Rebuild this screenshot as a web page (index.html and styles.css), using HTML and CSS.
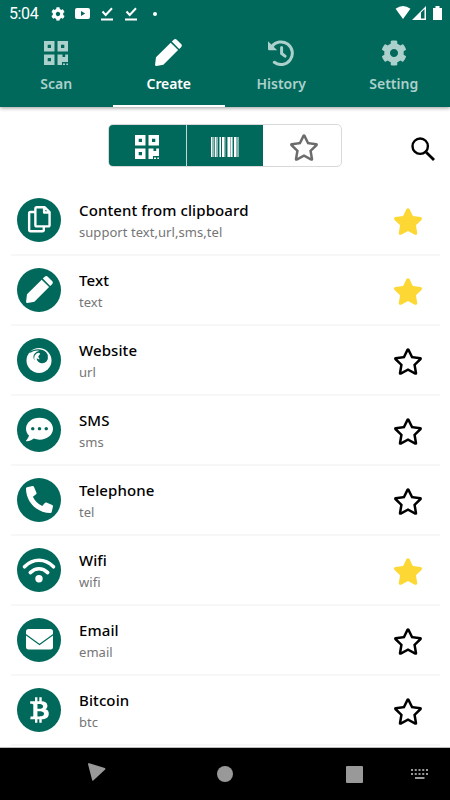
FILE: index.html
```html
<!DOCTYPE html>
<html lang="en">
<head>
<meta charset="utf-8">
<title>Create</title>
<link rel="stylesheet" href="styles.css">
</head>
<body>
<svg class="defs" aria-hidden="true">
  <symbol id="qr" viewBox="0 0 24 24"><path fill-rule="evenodd" d="M0 0h10.500v10.500H0zM3.700 3.700V7H7V3.700zM13.500 0H24v10.500H13.500zM17 3.700V7h3.300V3.700zM0 13.500h10.500V24H0zM3.700 17v3.300H7V17zM13.500 13.500h5v2.500h2.700v-2.500H24v7.500h-6V24h-4.500zM19 22.500h2V24h-2zM22.300 22.500H24V24h-1.700z"/></symbol>
  <symbol id="pen" viewBox="0 0 27 27"><path d="M1 18.300 15.700 3.700l7.400 7.400L8.400 25.700 1.500 27Q-.1 27.100.1 25.400zM16.800 2.600l1.900-1.800q1.500-1.500 3.300.1l4.100 4.100q1.500 1.600 0 3.200L24.200 10z"/></symbol>
  <symbol id="cog" viewBox="0 0 512 512"><path d="M487.400 315.700l-42.600-24.600c4.300-23.200 4.300-47 0-70.200l42.600-24.600c4.900-2.800 7.100-8.600 5.500-14-11.100-35.600-30-67.800-54.700-94.600-3.800-4.100-10-5.100-14.800-2.300L380.800 110c-17.900-15.400-38.500-27.300-60.800-35.100V25.800c0-5.600-3.900-10.500-9.400-11.700-36.700-8.200-74.300-7.800-109.200 0-5.500 1.200-9.400 6.100-9.400 11.700V75c-22.200 7.900-42.800 19.800-60.800 35.100L88.700 85.500c-4.900-2.800-11-1.900-14.800 2.300-24.700 26.700-43.600 58.900-54.700 94.600-1.700 5.400.6 11.200 5.500 14L67.300 221c-4.300 23.200-4.300 47 0 70.200l-42.600 24.600c-4.900 2.800-7.100 8.600-5.500 14 11.100 35.600 30 67.800 54.700 94.600 3.800 4.100 10 5.100 14.800 2.300l42.600-24.600c17.900 15.400 38.500 27.300 60.800 35.100v49.200c0 5.600 3.900 10.500 9.400 11.700 36.700 8.200 74.300 7.800 109.200 0 5.500-1.200 9.400-6.100 9.400-11.700v-49.200c22.200-7.900 42.800-19.800 60.800-35.100l42.600 24.600c4.900 2.800 11 1.900 14.800-2.300 24.700-26.700 43.600-58.900 54.700-94.600 1.500-5.500-.7-11.300-5.600-14.100zM256 336c-44.100 0-80-35.900-80-80s35.900-80 80-80 80 35.900 80 80-35.900 80-80 80z"/></symbol>
  <symbol id="history" viewBox="0 0 26 26"><path class="line" stroke-width="3" stroke-linecap="round" d="M3.800 6.700A11.300 11.300 0 1 1 6.300 22.300M13.600 7.500v6l3.400 2.700"/><path d="M0 1.200 9.200 10.300H1.200Q0 10.300 0 9z"/></symbol>
  <symbol id="star" viewBox="0 0 576 512"><path d="M259.300 17.800L194 150.200 47.900 171.500c-26.200 3.800-36.700 36.100-17.700 54.600l105.700 103-25 145.500c-4.500 26.300 23.200 46 46.400 33.700L288 439.600l130.700 68.700c23.200 12.200 50.900-7.400 46.400-33.700l-25-145.500 105.700-103c19-18.500 8.500-50.800-17.700-54.600L382 150.200 316.700 17.800c-11.700-23.600-45.600-23.900-57.400 0z"/></symbol>
  <symbol id="star-o" viewBox="0 0 576 512"><path d="M528.100 171.500L382 150.200 316.700 17.800c-11.700-23.600-45.600-23.900-57.400 0L194 150.200 47.900 171.500c-26.200 3.800-36.700 36.100-17.700 54.600l105.700 103-25 145.500c-4.500 26.300 23.200 46 46.400 33.700L288 439.600l130.700 68.700c23.200 12.200 50.900-7.400 46.400-33.700l-25-145.500 105.700-103c19-18.500 8.500-50.800-17.700-54.600zM388.600 312.300l23.700 138.400L288 385.400l-124.300 65.300 23.700-138.400-100.600-98 139-20.200 62.200-126 62.200 126 139 20.200-100.600 98z"/></symbol>
  <symbol id="download" viewBox="0 0 12 14"><path class="line" stroke-width="2" d="M1.500 4.500 4.700 8 11 1.200"/><path d="M0 11.500h12v2H0z"/></symbol>
</svg>

<header class="header">
  <div class="status">
    <span class="time">5:04</span>
    <svg class="s-cog"><use href="#cog"/></svg>
    <svg class="s-video" viewBox="0 0 15 11"><path fill-rule="evenodd" d="M2 0h11q2 0 2 2v7q0 2-2 2H2q-2 0-2-2V2q0-2 2-2zM6 3v5l4.200-2.500z"/></svg>
    <svg class="s-down"><use href="#download"/></svg>
    <svg class="s-down"><use href="#download"/></svg>
    <span class="dot"></span>
    <svg class="s-wifi" viewBox="0 0 16 14"><path d="M0 3Q8-3 16 3L8 14z"/></svg>
    <svg class="s-signal" viewBox="0 0 14 14"><path fill-rule="evenodd" d="M14 0v14H0zM9 6.500v6h3.500V3z"/></svg>
    <svg class="s-battery" viewBox="0 0 9 14"><path d="M0 2h2.500V0h4v2H9v12H0z"/></svg>
  </div>
  <nav class="tabs">
    <div class="tab"><svg class="t-qr"><use href="#qr"/></svg><span>Scan</span></div>
    <div class="tab active"><svg class="t-pen"><use href="#pen"/></svg><span>Create</span></div>
    <div class="tab"><svg class="t-history"><use href="#history"/></svg><span>History</span></div>
    <div class="tab"><svg class="t-cog"><use href="#cog"/></svg><span>Setting</span></div>
  </nav>
</header>

<main>
  <div class="toolbar">
    <div class="segments">
      <div class="segment on"><svg class="g-qr"><use href="#qr"/></svg></div>
      <div class="segment on"><svg class="g-bar" viewBox="0 0 28 20"><path d="M0 0h1v20H0zM4 0h1v20H4zM9 0h1v20H9zM11 0h2v20h-2zM17 0h2v20h-2zM20 0h1v20h-1zM23 0h2v20h-2zM26.500 0h1v20h-1z"/><path opacity=".55" d="M1 0h2.500v20H1zM5 0h2v20H5zM8 0h1v20H8zM13 0h1.500v20H13zM16 0h1v20h-1zM19 0h1v20h-1zM21 0h1v20h-1zM25 0h1v20h-1z"/></svg></div>
      <div class="segment"><svg class="star"><use href="#star-o"/></svg></div>
    </div>
    <svg class="search" viewBox="0 0 24 24"><circle class="line" cx="9.200" cy="9.200" r="7.700" stroke-width="2.400"/><path class="line" stroke-width="2.800" d="M15.200 15.200 23 23"/></svg>
  </div>

  <ul class="list">
    <li class="row">
      <span class="disc"><svg class="i-copy" viewBox="0 0 24 28"><path class="line" stroke-width="2.500" stroke-linejoin="round" d="M9.200 1.200h8.300l5 5v13.500q0 1.500-1.500 1.500H9.200q-1.500 0-1.500-1.500v-17q0-1.500 1.500-1.500zM16.800 1.500v5.200h5.500M6.800 6.200H2.700q-1.500 0-1.500 1.500v17q0 1.500 1.500 1.500H15q1.500 0 1.500-1.500v-3"/></svg></span>
      <div class="text"><span class="title">Content from clipboard</span><span class="sub">support text,url,sms,tel</span></div>
      <svg class="star gold"><use href="#star"/></svg>
    </li>
    <li class="row">
      <span class="disc"><svg class="i-pen"><use href="#pen"/></svg></span>
      <div class="text"><span class="title">Text</span><span class="sub">text</span></div>
      <svg class="star gold"><use href="#star"/></svg>
    </li>
    <li class="row">
      <span class="disc"><svg class="i-fox" viewBox="0 0 26 26"><circle cx="13" cy="13.500" r="12.500"/><path class="swirl" d="M2.500 5.800Q6 2.300 12.500 2.300 19.500 2.500 21.800 8 22.500 12 20.500 14.500 18 17 14.500 16 10.500 14.500 10.800 11 12 12.700 13.800 12.200 11.200 9.800 13.300 8 15 6.800 13.500 6 11 5 8.700 8.500 7.800 10.500 8.600 13.500 6.300 10 8.500 6.800 10.500 4 13.500 3.700 8 3 5 5.500z"/></svg></span>
      <div class="text"><span class="title">Website</span><span class="sub">url</span></div>
      <svg class="star"><use href="#star-o"/></svg>
    </li>
    <li class="row">
      <span class="disc"><svg class="i-chat" viewBox="0 0 512 512"><path d="M256 32C114.600 32 0 125.100 0 240c0 49.600 21.400 95 57 130.700C44.500 421.100 2.700 466 2.200 466.500c-2.200 2.300-2.800 5.700-1.500 8.700S4.800 480 8 480c66.300 0 116-31.800 140.600-51.400 32.700 12.300 69 19.400 107.400 19.400 141.400 0 256-93.100 256-208S397.400 32 256 32zM128 272c-17.700 0-32-14.300-32-32s14.300-32 32-32 32 14.300 32 32-14.300 32-32 32zm128 0c-17.700 0-32-14.300-32-32s14.300-32 32-32 32 14.300 32 32-14.300 32-32 32zm128 0c-17.700 0-32-14.300-32-32s14.300-32 32-32 32 14.300 32 32-14.300 32-32 32z"/></svg></span>
      <div class="text"><span class="title">SMS</span><span class="sub">sms</span></div>
      <svg class="star"><use href="#star-o"/></svg>
    </li>
    <li class="row">
      <span class="disc"><svg class="i-phone" viewBox="0 0 512 512"><path d="M497.390 361.800l-112-48a24 24 0 0 0-28 6.900l-49.600 60.600A370.660 370.660 0 0 1 130.600 204.110l60.600-49.600a23.940 23.940 0 0 0 6.900-28l-48-112A24.160 24.160 0 0 0 122.600.61l-104 24A24 24 0 0 0 0 48c0 256.500 207.900 464 464 464a24 24 0 0 0 23.400-18.600l24-104a24.290 24.290 0 0 0-14.010-27.600z"/></svg></span>
      <div class="text"><span class="title">Telephone</span><span class="sub">tel</span></div>
      <svg class="star"><use href="#star-o"/></svg>
    </li>
    <li class="row">
      <span class="disc"><svg class="i-wifi" viewBox="0 0 34 25"><path class="line" stroke-width="3.600" stroke-linecap="round" d="M2.500 8.800Q9 2.300 17 2.300T31.500 8.800M8.300 14.600Q12.300 10.700 17 10.700T25.700 14.600"/><circle cx="17" cy="20.800" r="3.700"/></svg></span>
      <div class="text"><span class="title">Wifi</span><span class="sub">wifi</span></div>
      <svg class="star gold"><use href="#star"/></svg>
    </li>
    <li class="row">
      <span class="disc"><svg class="i-mail" viewBox="0 0 27 21"><path d="M2.500 0h22Q27 0 27 2.500V5L13.500 14.700 0 5V2.500Q0 0 2.500 0zM0 6.400 13.500 16.200 27 6.400v11.900q0 2.200-2.500 2.200h-22Q0 20.500 0 18.300z"/></svg></span>
      <div class="text"><span class="title">Email</span><span class="sub">email</span></div>
      <svg class="star"><use href="#star-o"/></svg>
    </li>
    <li class="row">
      <span class="disc"><svg class="i-btc" viewBox="0 0 384 512"><path d="M310.204 242.638c27.730-14.180 45.377-39.390 41.280-81.300-5.358-57.351-52.458-76.573-114.850-81.929V0h-48.528v77.203c-12.605 0-25.525.315-38.444.63V0h-48.530v79.409c-17.842.539-38.622.276-97.370 0v51.678c38.314-.678 58.417-3.140 63.023 21.427v217.429c-2.925 19.492-18.524 16.685-53.255 16.071L3.765 443.680c88.481 0 97.370.315 97.370.315V512h48.530v-67.060c13.234.315 26.154.315 38.443.315V512h48.528v-68.005c81.299-4.412 135.647-24.894 142.895-101.467 5.671-61.446-23.320-88.862-69.326-99.890zM150.608 134.553c27.415 0 113.126-8.507 113.126 48.528 0 54.515-85.710 48.212-113.126 48.212v-96.740zm0 251.776V279.821c32.772 0 133.127-9.138 133.127 53.255-.001 60.186-100.355 53.253-133.127 53.253z"/></svg></span>
      <div class="text"><span class="title">Bitcoin</span><span class="sub">btc</span></div>
      <svg class="star"><use href="#star-o"/></svg>
    </li>
  </ul>
</main>

<footer class="navbar">
  <svg class="n-back" viewBox="0 0 18 18"><path d="M1.300.2 16.800 5q1.200.5.4 1.500L5.300 17.500q-1 .8-1.200-.5L.1 1.400Q0-.2 1.300.2z"/></svg>
  <span class="n-home"></span>
  <span class="n-recent"></span>
  <svg class="n-keys" viewBox="0 0 17 10"><path class="line" stroke-width="2" stroke-dasharray="2 1.750" d="M0 1h17M0 5h17"/><path d="M4 8h9.500v2H4z"/></svg>
</footer>
</body>
</html>
```
FILE: styles.css
```css
* { box-sizing: border-box; }
body {
  margin: 0;
  width: 450px;
  height: 800px;
  overflow: hidden;
  display: flex;
  flex-direction: column;
  background: #fff;
  color: #000;
  font-family: "Noto Sans", "Open Sans", sans-serif;
}
svg { display: block; flex: none; fill: currentColor; overflow: visible; }
.defs { width: 0; height: 0; position: absolute; }
.line { fill: none; stroke: currentColor; }
.swirl { fill: #00695b; }

.header {
  position: relative;
  flex: none;
  height: 107px;
  background: #00695b;
  color: #fff;
  box-shadow: 0 1px 4px rgba(0, 0, 0, .4);
}
.status { height: 27px; display: flex; align-items: center; padding: 0 8px 0 9px; }
.time { width: 42px; font: 16px/27px Roboto, sans-serif; letter-spacing: -.4px; }
.s-cog { width: 14px; height: 14px; margin-right: 10px; }
.s-video { width: 15px; height: 11px; margin-right: 11px; }
.s-down { width: 12px; height: 14px; margin-right: 12px; }
.dot { width: 4px; height: 4px; border-radius: 50%; background: #fff; margin: 0 auto 0 4px; }
.s-wifi { width: 16px; height: 13px; margin: -2px 1px 0 0; }
.s-signal { width: 14px; height: 14px; margin: -1px 7px 0 0; }
.s-battery { width: 9px; height: 14px; margin-top: -1px; }

.tabs { display: grid; grid-template-columns: repeat(4, 1fr); height: 80px; }
.tab {
  display: grid;
  grid-template-rows: 51px 1fr;
  justify-items: center;
  align-items: center;
  color: #acd0cb;
  font-size: 14px;
  font-weight: 600;
  line-height: 20px;
}
.tab span { align-self: start; margin-top: -4px; }
.tab.active { color: #fff; border-bottom: 2px solid #fff; letter-spacing: -.1px; }
.t-qr { width: 24px; height: 24px; }
.t-pen { width: 27px; height: 27px; }
.t-history { width: 26px; height: 26px; }
.t-cog { width: 26px; height: 26px; }

main { height: 641px; overflow: hidden; border-bottom: 1px solid #bbb; }
.toolbar { height: 79px; padding: 17px 15px 0 108px; display: flex; justify-content: space-between; }
.segments {
  width: 234px;
  height: 43px;
  display: grid;
  grid-template-columns: 77px 77px 1fr;
  border: 1px solid #d9d9d9;
  border-radius: 5px;
  overflow: hidden;
}
.segment { display: grid; place-items: center; color: #6c6c6c; padding-left: 3px; }
.segment .star { margin-top: 3px; }
.segment.on { background: #00695b; color: #fff; padding-left: 0; }
.segment + .segment.on { border-left: 1px solid #c3d6d3; }
.g-qr { width: 24px; height: 24px; margin: 3px 2px 0 0; }
.g-bar { width: 28px; height: 20px; margin-top: 3px; }
.search { width: 24px; height: 24px; margin-top: 13px; }

.list { list-style: none; margin: 0; padding: 0 10px 0 11px; }
.row {
  height: 70px;
  display: flex;
  align-items: center;
  padding: 0 17px 1px 6px;
  border-bottom: 2px solid #f7f7f7;
}
.disc {
  width: 44px;
  height: 44px;
  margin-right: 18px;
  border-radius: 50%;
  background: #00695b;
  color: #fff;
  display: grid;
  place-items: center;
}
.text { flex: 1; display: flex; flex-direction: column; align-items: flex-start; padding-top: 2px; }
.title { font-size: 15px; line-height: 22px; font-weight: 500; letter-spacing: .1px; }
.sub { font-size: 13px; line-height: 22px; color: #757575; letter-spacing: .05px; }
.star { width: 30px; height: 27px; margin-top: 3px; }
.gold { color: #fdd835; }
.i-copy { width: 23px; height: 27px; }
.i-pen, .i-chat, .i-phone { width: 27px; height: 27px; }
.i-fox { width: 26px; height: 26px; }
.i-wifi { width: 34px; height: 25px; margin-top: 2px; }
.i-mail { width: 27px; height: 21px; }
.i-btc { width: 19px; height: 26px; }

.navbar {
  height: 52px;
  background: #000;
  color: #999;
  display: flex;
  align-items: center;
  padding-left: 88px;
}
.n-back { width: 18px; height: 18px; margin: -4px 111px 0 0; }
.n-home { width: 16px; height: 16px; border-radius: 50%; background: #999; margin-right: 113px; }
.n-recent { width: 17px; height: 17px; border-radius: 1px; background: #999; margin-right: 48px; }
.n-keys { width: 17px; height: 10px; }
```
